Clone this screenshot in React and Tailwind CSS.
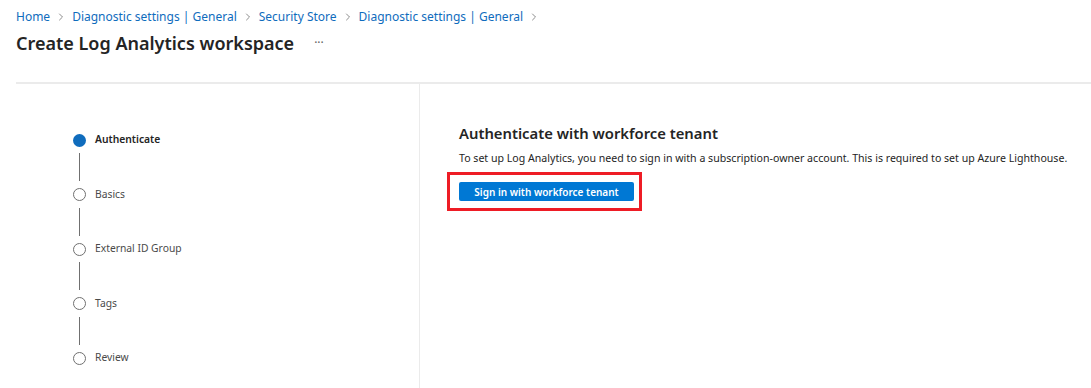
import { ChevronRight } from "lucide-react";

const crumbs = [
  "Home",
  "Diagnostic settings | General",
  "Security Store",
  "Diagnostic settings | General",
];

const steps = ["Authenticate", "Basics", "External ID Group", "Tags", "Review"];

function Stepper() {
  return (
    <div className="flex flex-col pl-[57px]">
      {steps.map((step, i) => (
        <div key={step} className="flex flex-col">
          <div className="flex items-center gap-[9px] h-[14px]">
            {i === 0 ? (
              <div className="w-[13px] h-[13px] rounded-full bg-[#0f6cbd]" />
            ) : (
              <div className="w-[13px] h-[13px] rounded-full border-[1.5px] border-[#707070] bg-white" />
            )}
            <span
              className={
                i === 0
                  ? "text-[10.3px] font-semibold text-[#242424]"
                  : "text-[10.3px] text-[#4a4a4a]"
              }
            >
              {step}
            </span>
          </div>
          {i < steps.length - 1 && (
            <div className="ml-[6px] w-px h-[28px] mt-[6px] mb-[6.5px] bg-[#707070]" />
          )}
        </div>
      ))}
    </div>
  );
}

export default function App() {
  return (
    <div
      className="w-[1091px] h-[388px] bg-white overflow-hidden"
      style={{ fontFamily: '"Noto Sans", "Open Sans", sans-serif' }}
    >
      <div className="px-4 pt-[7px]">
        <nav className="flex items-center text-[12px] text-[#0f6cbd] h-[20px]">
          {crumbs.map((c, i) => (
            <div key={i} className="flex items-center">
              <span>{c}</span>
              <ChevronRight className="w-[12px] h-[12px] mx-[5px] text-[#707070]" strokeWidth={1.6} />
            </div>
          ))}
        </nav>
        <div className="flex items-center mt-[1px] h-[30px]">
          <h1 className="text-[18px] font-semibold text-[#242424]">
            Create Log Analytics workspace
          </h1>
          <span className="ml-[20px] text-[12px] text-[#616161] leading-none">···</span>
        </div>
      </div>
      <div className="ml-4 mt-[24px] h-[2px] bg-[#ebebeb]" />
      <div className="flex ml-4">
        <div className="w-[404px] h-[310px] border-r border-[#ebebeb] pt-[49px]">
          <Stepper />
        </div>
        <div className="pl-[39px] pt-[38px]">
          <h2 className="text-[14.8px] font-semibold text-[#242424] leading-[22px]">
            Authenticate with workforce tenant
          </h2>
          <p className="mt-[6px] text-[10.6px] text-[#242424] leading-[16px]">
            To set up Log Analytics, you need to sign in with a subscription-owner account. This is required to set up Azure Lighthouse.
          </p>
          <div className="mt-[6px] -ml-[12px] w-[195px] h-[39px] border-[3px] border-[#ee1c25] flex items-start pt-[7px] pl-[9px]">
            <button className="w-[175px] h-[19px] bg-[#0078d4] rounded-[2px] text-white text-[10px] font-semibold leading-none">
              Sign in with workforce tenant
            </button>
          </div>
        </div>
      </div>
    </div>
  );
}
